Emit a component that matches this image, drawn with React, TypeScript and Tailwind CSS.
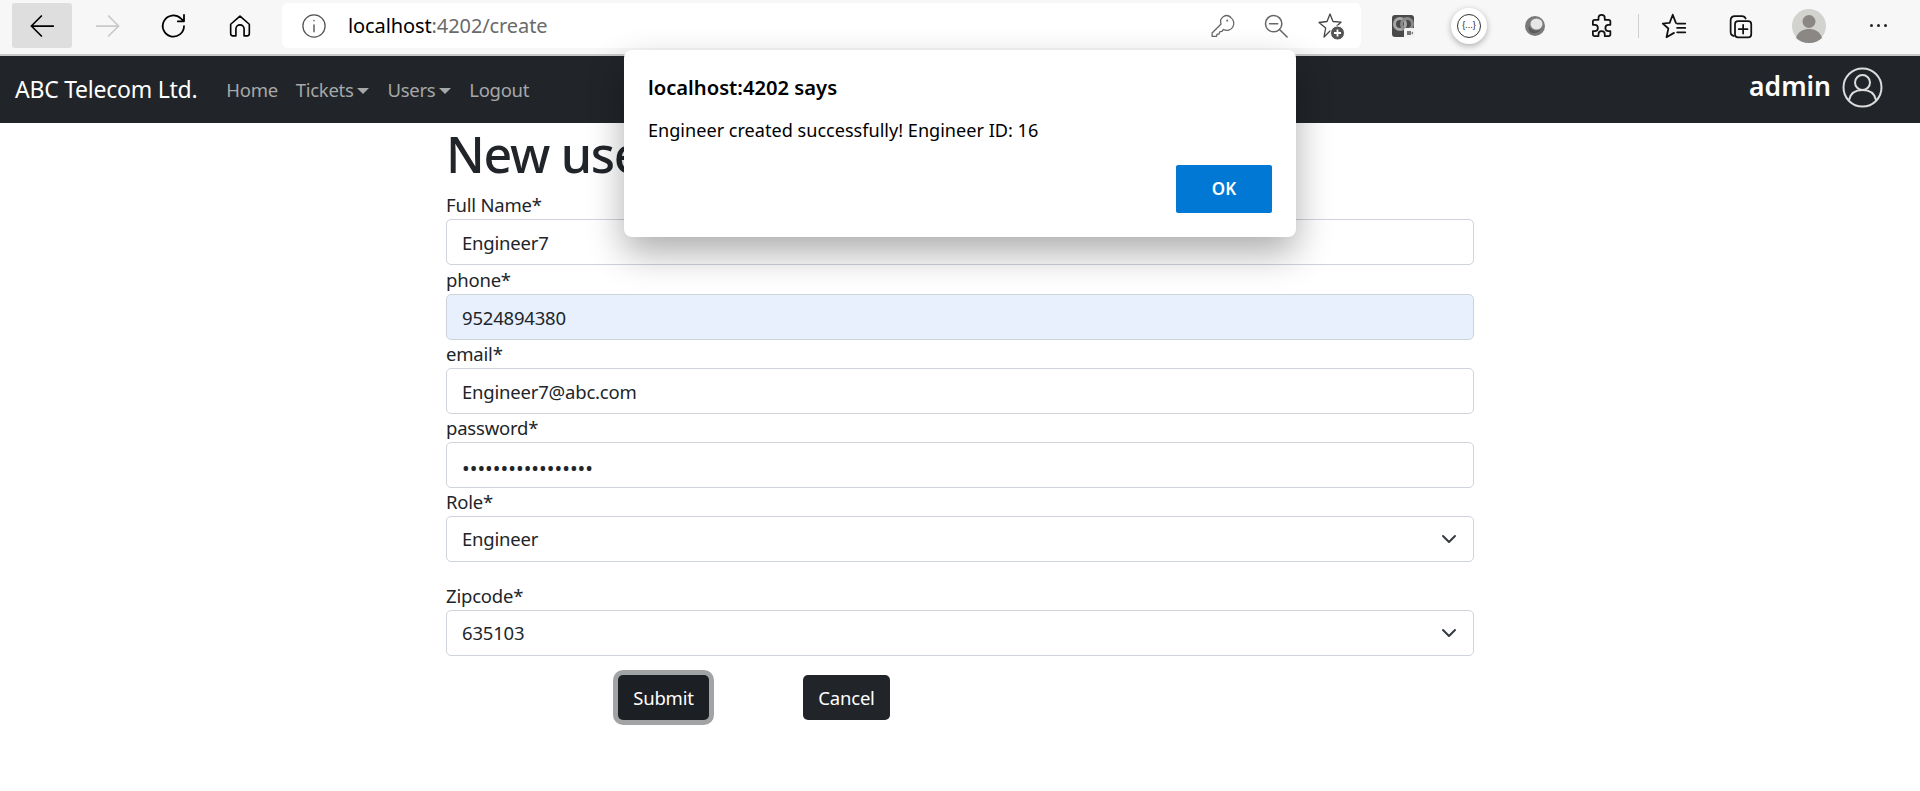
import type { ReactNode } from "react";

const Icon = ({ children, size = 24 }: { children: ReactNode; size?: number }) => (
  <svg width={size} height={size} viewBox="0 0 24 24" fill="none" stroke="currentColor" strokeWidth="1.4" strokeLinecap="round" strokeLinejoin="round">
    {children}
  </svg>
);

const ToolButton = ({ children, active }: { children: ReactNode; active?: boolean }) => (
  <div className={active ? "w-[60px] h-[45px] rounded-[3px] bg-[#dedede] flex items-center justify-center" : "w-[60px] h-[45px] flex items-center justify-center"}>
    {children}
  </div>
);

const Chevron = () => (
  <svg className="absolute right-[17px] top-[17px] pointer-events-none" width="16" height="12" viewBox="0 0 16 12" fill="none" stroke="#343a40" strokeWidth="2" strokeLinecap="round" strokeLinejoin="round">
    <path d="M2 3l6 6 6-6" />
  </svg>
);

const inputClass =
  "block w-full h-[46px] px-[15px] rounded-[5px] border border-[#ced4da] text-[#212529] outline-none";
const inputText = "text-[18.5px] tracking-[-0.2px]";

const Field = ({ label, children, className }: { label: string; children: ReactNode; className?: string }) => (
  <div className={className}>
    <label className="block h-[28px] text-[18.5px] tracking-[-0.2px] leading-[28px] text-[#212529]">{label}</label>
    {children}
  </div>
);

const Select = ({ value }: { value: string }) => (
  <div className="relative">
    <select defaultValue={value} className={`${inputClass} ${inputText} bg-white appearance-none`}>
      <option>{value}</option>
    </select>
    <Chevron />
  </div>
);

const BrowserBar = () => (
  <div className="h-[56px] bg-[#f7f7f7] border-b-2 border-[#c8c8c8] flex items-start pt-[3px] pl-[12px]">
    <div className="flex items-center gap-[6px] text-black">
      <ToolButton active>
        <Icon size={30}><path d="M21 12H3.500M11.500 4l-8 8 8 8" /></Icon>
      </ToolButton>
      <ToolButton>
        <span className="text-[#c9c9c9]"><Icon size={30}><path d="M3 12h17.500M12.500 4l8 8-8 8" /></Icon></span>
      </ToolButton>
      <ToolButton>
        <Icon size={30}><path d="M20 12a8.500 8.500 0 1 1-2.600-6.100L20 8.200M20 3v5.200h-5" /></Icon>
      </ToolButton>
      <ToolButton>
        <Icon size={28}><path d="M12 3.500l8 7v8a2 2 0 0 1-2 2h-2.500v-6a3.500 3.500 0 0 0-7 0v6H6a2 2 0 0 1-2-2v-8z" /></Icon>
      </ToolButton>
    </div>
    <div className="ml-[12px] w-[1079px] h-[45px] bg-white rounded-[6px] flex items-center">
      <span className="ml-[18px] text-[#555]">
        <Icon size={28}>
          <circle cx="12" cy="12" r="9.500" strokeWidth="1.100" />
          <path d="M12 11v6M12 7.200v.4" strokeWidth="1.200" />
        </Icon>
      </span>
      <span className="ml-[20px] text-[20px] tracking-[-0.1px] text-black">
        localhost<span className="text-[#6a6a6a]">:4202/create</span>
      </span>
      <div className="ml-auto mr-[15px] flex items-center gap-[26px] text-[#666]">
        <Icon size={28}>
          <path d="M19.500 4.500a5.200 5.200 0 0 0-8.300 5.800L3.500 18v2.800h3.800l.5-1.800h1.700l.5-2 1.800-.3 1.500-1.700a5.200 5.200 0 0 0 5.700-10.500z" strokeWidth="1.100" />
          <path d="M16.500 7.200v.2" strokeWidth="1.600" />
        </Icon>
        <Icon size={28}>
          <circle cx="10" cy="10" r="7" strokeWidth="1.300" />
          <path d="M6.500 10h7M15 15l6.500 6.500" strokeWidth="1.300" />
        </Icon>
        <svg width="30" height="30" viewBox="0 0 30 30" fill="none">
          <path d="M14 3l3 7.500 8 .7-6 5.300 1 7.500-6-4-6 6 1.700-9L3 11.500l8-1z" stroke="#444" strokeWidth="1.300" strokeLinejoin="round" />
          <circle cx="21.500" cy="22" r="7" fill="#555" stroke="#fff" strokeWidth="1" />
          <path d="M21.500 18.500v7M18 22h7" stroke="#fff" strokeWidth="1.800" />
        </svg>
      </div>
    </div>
    <div className="ml-[9px] flex items-center h-[45px] text-[#111]">
      <div className="w-[66px] flex justify-center">
        <svg width="28" height="28" viewBox="0 0 28 28">
          <rect x="3" y="3" width="22" height="22" rx="3" fill="#4a4a4a" />
          <circle cx="11" cy="12" r="5.500" fill="none" stroke="#a8a8a8" strokeWidth="3" />
          <circle cx="18" cy="12" r="5.500" fill="none" stroke="#8a8a8a" strokeWidth="3" />
          <rect x="15" y="16" width="11" height="10" rx="1.500" fill="#f2f2f2" />
          <path d="M18 19h4v4h-4zM22 21l2-1.500v3z" fill="#777" />
        </svg>
      </div>
      <div className="w-[66px] flex justify-center">
        <div className="w-[36px] h-[36px] rounded-full bg-white shadow-[0_2px_6px_rgba(0,0,0,0.3)] flex items-center justify-center">
          <div className="w-[24px] h-[24px] rounded-full border border-[#333] flex items-center justify-center text-[9px] leading-none font-['Liberation_Sans'] text-[#222]">
            {"{...}"}
          </div>
        </div>
      </div>
      <div className="w-[66px] flex justify-center">
        <svg width="22" height="22" viewBox="0 0 22 22">
          <circle cx="11" cy="11" r="10" fill="#7a7a7a" />
          <ellipse cx="12.500" cy="9" rx="6" ry="5.500" fill="#e6e6e6" />
          <path d="M5 11c2 5 8 6 12 3-2 4-6 5-9 4s-4-4-3-7z" fill="#5a5a5a" />
        </svg>
      </div>
      <div className="w-[66px] flex justify-center">
        <Icon size={30}>
          <path d="M10 5.500a2.500 2.500 0 0 1 5 0V7h3a1.500 1.500 0 0 1 1.500 1.500V11H18a2.500 2.500 0 0 0 0 5h1.500v2.500A1.500 1.500 0 0 1 18 20h-3v-1.500a2.500 2.500 0 0 0-5 0V20H7a1.500 1.500 0 0 1-1.500-1.500V16H7a2.500 2.500 0 0 0 0-5H5.500V8.500A1.500 1.500 0 0 1 7 7h3z" />
        </Icon>
      </div>
      <div className="ml-[4px] w-[1px] h-[24px] bg-[#d0d0d0] mr-[2px]" />
      <div className="w-[66px] flex justify-center">
        <Icon size={30}>
          <path d="M11 3l2.500 6.500M11 3L8.500 9.500 3 10l4.500 4L6 21l6-3.500M14.500 10h6.500M14.500 13.500h6.500M14.500 17h6.500" />
        </Icon>
      </div>
      <div className="w-[66px] flex justify-center">
        <Icon size={30}>
          <path d="M7 20l-1-.5C5 19 4.500 18 4.500 17V7.500C4.500 5 6 4 8 4h5.500c1.500 0 2.500.5 3 2" />
          <rect x="8" y="8" width="13" height="13" rx="2.500" />
          <path d="M14.500 11v7M11 14.500h7" />
        </Icon>
      </div>
      <div className="w-[72px] flex justify-center">
        <svg width="34" height="34" viewBox="0 0 34 34">
          <circle cx="17" cy="17" r="17" fill="#d2d2ce" />
          <circle cx="17" cy="12.500" r="6.500" fill="#8a8784" />
          <path d="M4 29c2-7 8-9 13-9s11 2 13 9c-3 3-8 5-13 5S7 32 4 29z" fill="#8a8784" />
        </svg>
      </div>
      <div className="w-[66px] flex justify-center gap-[4px]">
        <span className="w-[3px] h-[3px] rounded-full bg-[#222]" />
        <span className="w-[3px] h-[3px] rounded-full bg-[#222]" />
        <span className="w-[3px] h-[3px] rounded-full bg-[#222]" />
      </div>
    </div>
  </div>
);

const Caret = () => <span className="inline-block ml-[4px] align-[3px] border-x-[6px] border-x-transparent border-t-[6px] border-t-current" />;

const NavBar = () => (
  <nav className="h-[67px] bg-[#212529] flex items-center px-[15px]">
    <span className="text-[23px] tracking-[-0.25px] text-white mr-[29px]">ABC Telecom Ltd.</span>
    <div className="flex items-center gap-[18px] text-[18.5px] tracking-[-0.3px] text-[#a6a8aa]">
      <a>Home</a>
      <a>Tickets<Caret /></a>
      <a>Users<Caret /></a>
      <a>Logout</a>
    </div>
    <div className="ml-auto mr-[22px] mb-[5px] flex items-center gap-[11px] text-white">
      <span className="text-[26.5px] font-semibold">admin</span>
      <svg width="41" height="41" viewBox="0 0 41 41" fill="none" stroke="#dcdcdc" strokeWidth="2">
        <circle cx="20.500" cy="20.500" r="19" />
        <circle cx="20.500" cy="15.500" r="7.500" />
        <path d="M7 33c1.500-7 7-10 13.500-10S32.500 26 34 33" />
      </svg>
    </div>
  </nav>
);

const AlertDialog = () => (
  <div className="absolute left-[624px] top-[50px] w-[672px] h-[187px] bg-white rounded-[8px] shadow-[0_16px_36px_rgba(0,0,0,0.32)] px-[24px] pt-[24px]">
    <div className="text-[20.2px] font-semibold text-black leading-[26px]">localhost:4202 says</div>
    <div className="mt-[17px] text-[18.1px] text-black leading-[26px]">Engineer created successfully! Engineer ID: 16</div>
    <div className="flex justify-end mt-[22px]">
      <button className="w-[96px] h-[48px] rounded-[2px] bg-[#0078d4] text-white text-[17px] font-semibold">OK</button>
    </div>
  </div>
);

export default function App() {
  return (
    <div className="relative h-[791px] overflow-hidden bg-white font-['Noto_Sans',sans-serif] text-[#212529]">
      <BrowserBar />
      <NavBar />
      <div className="w-[1028px] mx-auto">
        <h1 className="h-[68px] text-[50px] leading-[62px] tracking-[-1.3px] font-[550]">New user</h1>
        <Field label="Full Name*" className="mb-[1px]">
          <input readOnly value="Engineer7" className={`${inputClass} ${inputText} bg-white`} />
        </Field>
        <Field label="phone*">
          <input readOnly value="9524894380" className={`${inputClass} ${inputText} bg-[#e8f0fe]`} />
        </Field>
        <Field label="email*">
          <input readOnly value="Engineer7@abc.com" className={`${inputClass} ${inputText} bg-white`} />
        </Field>
        <Field label="password*">
          <input readOnly type="password" value="Engineer7@abc.123" className={`${inputClass} pt-[6px] text-[20.5px] bg-white`} />
        </Field>
        <Field label="Role*" className="mb-[20px]">
          <Select value="Engineer" />
        </Field>
        <Field label="Zipcode*">
          <Select value="635103" />
        </Field>
        <div className="flex mt-[19px] pl-[172px] gap-[94px]">
          <button className="w-[91px] h-[45px] rounded-[5px] bg-[#1c1f23] text-white text-[18.5px] tracking-[-0.2px] ring-[5px] ring-[#a1a3a5]">Submit</button>
          <button className="w-[87px] h-[45px] rounded-[5px] bg-[#212529] text-white text-[18.5px] tracking-[-0.2px]">Cancel</button>
        </div>
      </div>
      <AlertDialog />
    </div>
  );
}
